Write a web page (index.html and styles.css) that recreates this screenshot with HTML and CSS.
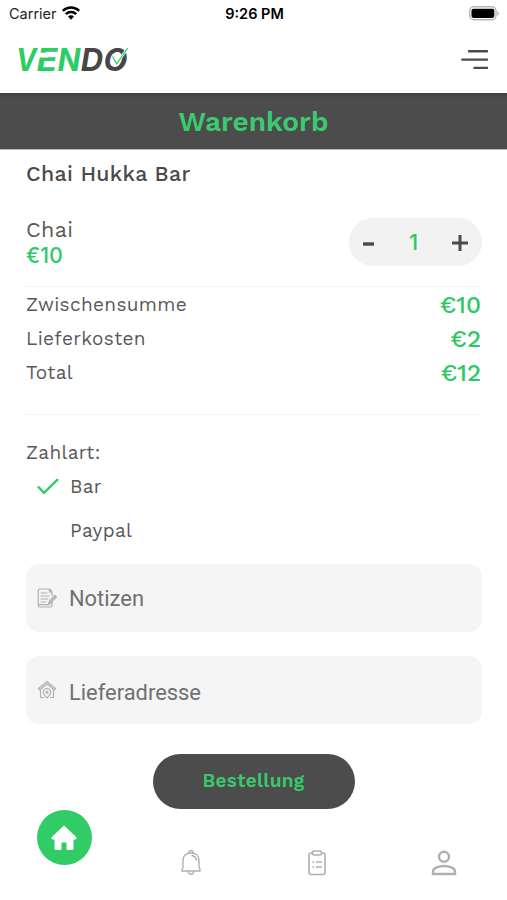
FILE: index.html
```html
<!DOCTYPE html>
<html lang="de">
<head>
<meta charset="utf-8">
<title>Warenkorb</title>
<link rel="stylesheet" href="styles.css">
</head>
<body>
<div class="statusbar">
  <div class="carrier"><span>Carrier</span>
    <svg width="18" height="14" viewBox="0 0 18 14" fill="none" stroke="#000" stroke-width="2.5"><path d="M.8 4.900a11.800 11.800 0 0 1 16.400 0M3.800 8.200a7.400 7.400 0 0 1 10.400 0"/><path d="M9 13.700 6 10.600a4.200 4.200 0 0 1 6 0z" fill="#000" stroke="none"/></svg>
  </div>
  <div class="time">9:26 PM</div>
  <svg class="battery" width="31" height="15" viewBox="0 0 31 15"><rect x=".8" y=".8" width="26.2" height="13" rx="4" fill="#fff" stroke="#b5b5b5" stroke-width="1.4"/><rect x="2.500" y="2.700" width="22.800" height="9.200" rx="1.8"/><path d="M28.3 5v4.8c2.200-.8 2.200-4 0-4.800" fill="#b5b5b5"/></svg>
</div>
<header class="header">
  <svg class="logo" width="120" height="36" viewBox="0 0 120 36">
    <g class="logo-text">
      <text x="-2" y="27" textLength="20.500" lengthAdjust="spacingAndGlyphs" fill="#2fcc66">V</text>
      <text x="18.600" y="27" textLength="21" lengthAdjust="spacingAndGlyphs" fill="#2fcc66">E</text>
      <text x="39.600" y="27" textLength="23" lengthAdjust="spacingAndGlyphs" fill="#2fcc66">N</text>
      <text x="62.800" y="27" fill="#474747">D</text>
      <text x="85.500" y="27" fill="#474747">O</text>
    </g>
    <path d="M22.300 8.800h8.600l-.9 4.600h-8.900z" fill="#fff"/>
    <path d="m94.700 12.500 4 7.300 11-15.800" fill="none" stroke="#fff" stroke-width="2.600"/>
    <path d="m94.700 12.500 4 7.300 11-15.800" fill="none" stroke="#2fcc66" stroke-width="1.300"/>
  </svg>
  <svg width="28" height="22" viewBox="0 0 28 22" stroke="#4a4a4a" stroke-width="2.400" stroke-linecap="round"><path d="M8 2.300h18M1.300 10.600h24.700M13.500 18.900h12.500"/></svg>
</header>
<h1 class="title"><span>Warenkorb</span></h1>
<main class="cart">
  <h2 class="shop"><span>Chai Hukka Bar</span></h2>
  <div class="item">
    <div class="item-info"><div class="item-name">Chai</div><div class="item-price">€10</div></div>
    <div class="stepper"><svg width="12" height="4"><path d="M0 2h11" stroke="#4a4a4a" stroke-width="3.400"/></svg><span>1</span><svg width="16" height="16"><path d="M0 8h16M8 0v16" stroke="#4a4a4a" stroke-width="3"/></svg></div>
  </div>
  <div class="sums">
    <div class="row"><span>Zwischensumme</span><b>€10</b></div>
    <div class="row"><span>Lieferkosten</span><b>€2</b></div>
    <div class="row"><span>Total</span><b>€12</b></div>
  </div>
  <div class="pay-label">Zahlart:</div>
  <div class="option"><svg width="22" height="17" viewBox="0 0 22 17" fill="none" stroke="#2fcc66" stroke-width="2.400"><path d="m1 8.500 6 6.300L21 1.200"/></svg><span>Bar</span></div>
  <div class="option second"><span>Paypal</span></div>
  <div class="field">
    <svg width="20" height="20" viewBox="0 0 20 20" fill="none" stroke="#b0b0b0" stroke-width="1.200"><path d="M15 8V3.500L12.500 1H2.500Q1.300 1 1.300 2.500v15q0 1.500 1.200 1.500h11q1.500 0 1.500-1.500V14M12.500 1v3H15M3.500 5h7M3.500 8h9M3.500 11h8M3.500 14h6M1.500 16.700h10"/><path d="m11.500 16.500 1-3.500L18 7.500 19.300 9l-5.500 6z" fill="#c4c4c4"/></svg>
    <span>Notizen</span>
  </div>
  <div class="field address">
    <svg width="20" height="20" viewBox="0 0 20 20" fill="none" stroke="#b0b0b0" stroke-width="1.200"><path d="m1.500 8.500 8.500-7 8.500 7-1.200 1.300L10 3.700 2.700 9.800zM3.500 10v7.500h3.500M16.500 10v7.500h-3.500"/><path d="M10 18c-2.500-2.500-3.700-4-3.700-5.700a3.700 3.700 0 0 1 7.400 0C13.700 14 12.500 15.500 10 18z"/><circle cx="10" cy="12.300" r="1"/></svg>
    <span>Lieferadresse</span>
  </div>
  <button class="order"><span>Bestellung</span></button>
</main>
<nav class="tabs">
  <div class="home"><svg width="26" height="26" viewBox="0 0 26 26"><path d="M13 .5.8 12q-.8 1 .5 2.500H3.500v9q0 1.500 1.500 1.500h4.500q1 0 1-1v-5.500q0-1 1-1h3q1 0 1 1V24q0 1 1 1H21q1.500 0 1.500-1.500v-9h2.200q1.300-1.500.5-2.500z" fill="#fff"/></svg></div>
  <svg width="20" height="26" viewBox="0 0 20 26" fill="none" stroke="#b0b0b0" stroke-width="1.400"><path d="M1 21h18v-1.500l-1-2V10c0-4-3-7-8-7s-8 3-8 7v7.500l-1 2zM8 3V1.700q0-.9 2-.9t2 .9V3M7 21q.5 3.500 3 3.500t3-3.500"/><path d="M10.500 5.500q4.500.5 5 5"/></svg>
  <svg width="18" height="26" viewBox="0 0 18 26" fill="none" stroke="#b0b0b0" stroke-width="1.600"><path d="M4.500 3H3Q1 3 1 5v17.500q0 2 2 2h12q2 0 2-2V5q0-2-2-2h-1.500"/><rect x="4.500" y="1" width="9" height="4" rx="1.700"/><path d="M4.500 12h1.700M8 12h6M4.500 17h1.700M8 17h6"/></svg>
  <svg width="26" height="26" viewBox="0 0 26 26" fill="none" stroke="#b0b0b0" stroke-width="2.400"><circle cx="13" cy="6.800" r="5"/><path d="M2 24v-2.500c0-3.500 6-5.500 11-5.500s11 2 11 5.500V24z"/></svg>
</nav>
</body>
</html>
```
FILE: styles.css
```css
* { box-sizing: border-box; }
body { margin: 0; width: 507px; height: 900px; overflow: hidden; background: #fff; color: #585858; font-family: "Work Sans", Inter, sans-serif; display: flex; flex-direction: column; }
h1, h2 { margin: 0; }
span, b { white-space: nowrap; }
.statusbar { height: 28px; display: grid; grid-template-columns: 1fr auto 1fr; align-items: center; padding: 0 7px 1px 9px; color: #000; font: 14.5px Inter, sans-serif; flex: none; }
.carrier { display: flex; align-items: center; gap: 5px; color: #222; }
.carrier svg { margin-bottom: 1px; }
.time { font-weight: 600; font-size: 14.5px; }
.battery { justify-self: end; margin-bottom: 1px; }
.header { height: 65px; flex: none; display: flex; justify-content: space-between; align-items: flex-start; padding: 16px 18px 0 18px; }
.header > svg:last-child { margin-top: 5px; }
.logo { overflow: visible; }
.logo-text { font-family: Inter, sans-serif; font-weight: 700; font-style: italic; font-size: 31px; }
.title { height: 57px; flex: none; background: linear-gradient(#404040, #4c4c4c 5px); border-bottom: 1px solid #bbb; display: flex; align-items: center; justify-content: center; color: #3acb70; font-size: 28px; font-weight: 600; padding-top: 1px; }
.cart { padding: 0 26px; flex: none; display: flex; flex-direction: column; letter-spacing: .35px; }
.shop { margin-top: 9px; height: 29px; line-height: 29px; font-size: 21.3px; font-weight: 500; color: #4b4b4b; }
.item { height: 99px; display: flex; justify-content: space-between; border-bottom: 1px solid #f3f3f3; padding-top: 28px; }
.item-info { font-size: 21.5px; line-height: 26px; padding-top: 1px; }
.item-price { color: #2fc866; font-weight: 500; letter-spacing: .2px; font-family: Inter, sans-serif; font-size: 21px; }
.stepper { margin: 2px -1px 0 0; width: 133px; height: 48px; border-radius: 24px; background: #f2f2f2; display: flex; align-items: center; justify-content: space-between; padding: 0 14px; color: #2fc866; font: 500 22px Inter, sans-serif; letter-spacing: 0; }
.stepper svg:first-child { margin-top: 3px; }
.stepper svg:last-child { margin-top: 2px; }
.sums { height: 128px; border-bottom: 1px solid #f3f3f3; }
.row { height: 34px; display: flex; justify-content: space-between; align-items: center; font-size: 19px; }
.row b { color: #2fc866; font-size: 24px; font-weight: 500; letter-spacing: 0; padding-top: 1px; }
.pay-label { margin-top: 25px; height: 26px; line-height: 26px; font-size: 19px; }
.option { margin-top: 7px; height: 26px; display: flex; align-items: center; font-size: 19px; gap: 11px; padding-left: 11px; }
.option.second { margin-top: 18px; padding-left: 44px; }
.field { margin-top: 21px; height: 68px; width: 456px; border-radius: 13px; background: #f5f5f5; display: flex; align-items: center; gap: 12px; padding-left: 11px; font-family: Roboto, sans-serif; font-size: 21.9px; color: #707070; letter-spacing: 0; }
.field.address { margin-top: 24px; }
.address svg { margin-bottom: 1px; }
.address span { margin-top: 4px; }
.order { align-self: center; margin: 30px 0 0; width: 202px; height: 55px; border: 0; border-radius: 28px; background: #4c4c4c; color: #38c96d; font: 600 19px "Work Sans", Inter, sans-serif; letter-spacing: .3px; padding-bottom: 3px; }
.tabs { display: grid; grid-template-columns: repeat(4, 126.5px); justify-items: center; align-items: start; padding: 1px 0 0 1px; }
.home { width: 55px; height: 55px; border-radius: 50%; background: #31cc66; display: flex; align-items: center; justify-content: center; }
.tabs > svg { margin-top: 40px; }
```
